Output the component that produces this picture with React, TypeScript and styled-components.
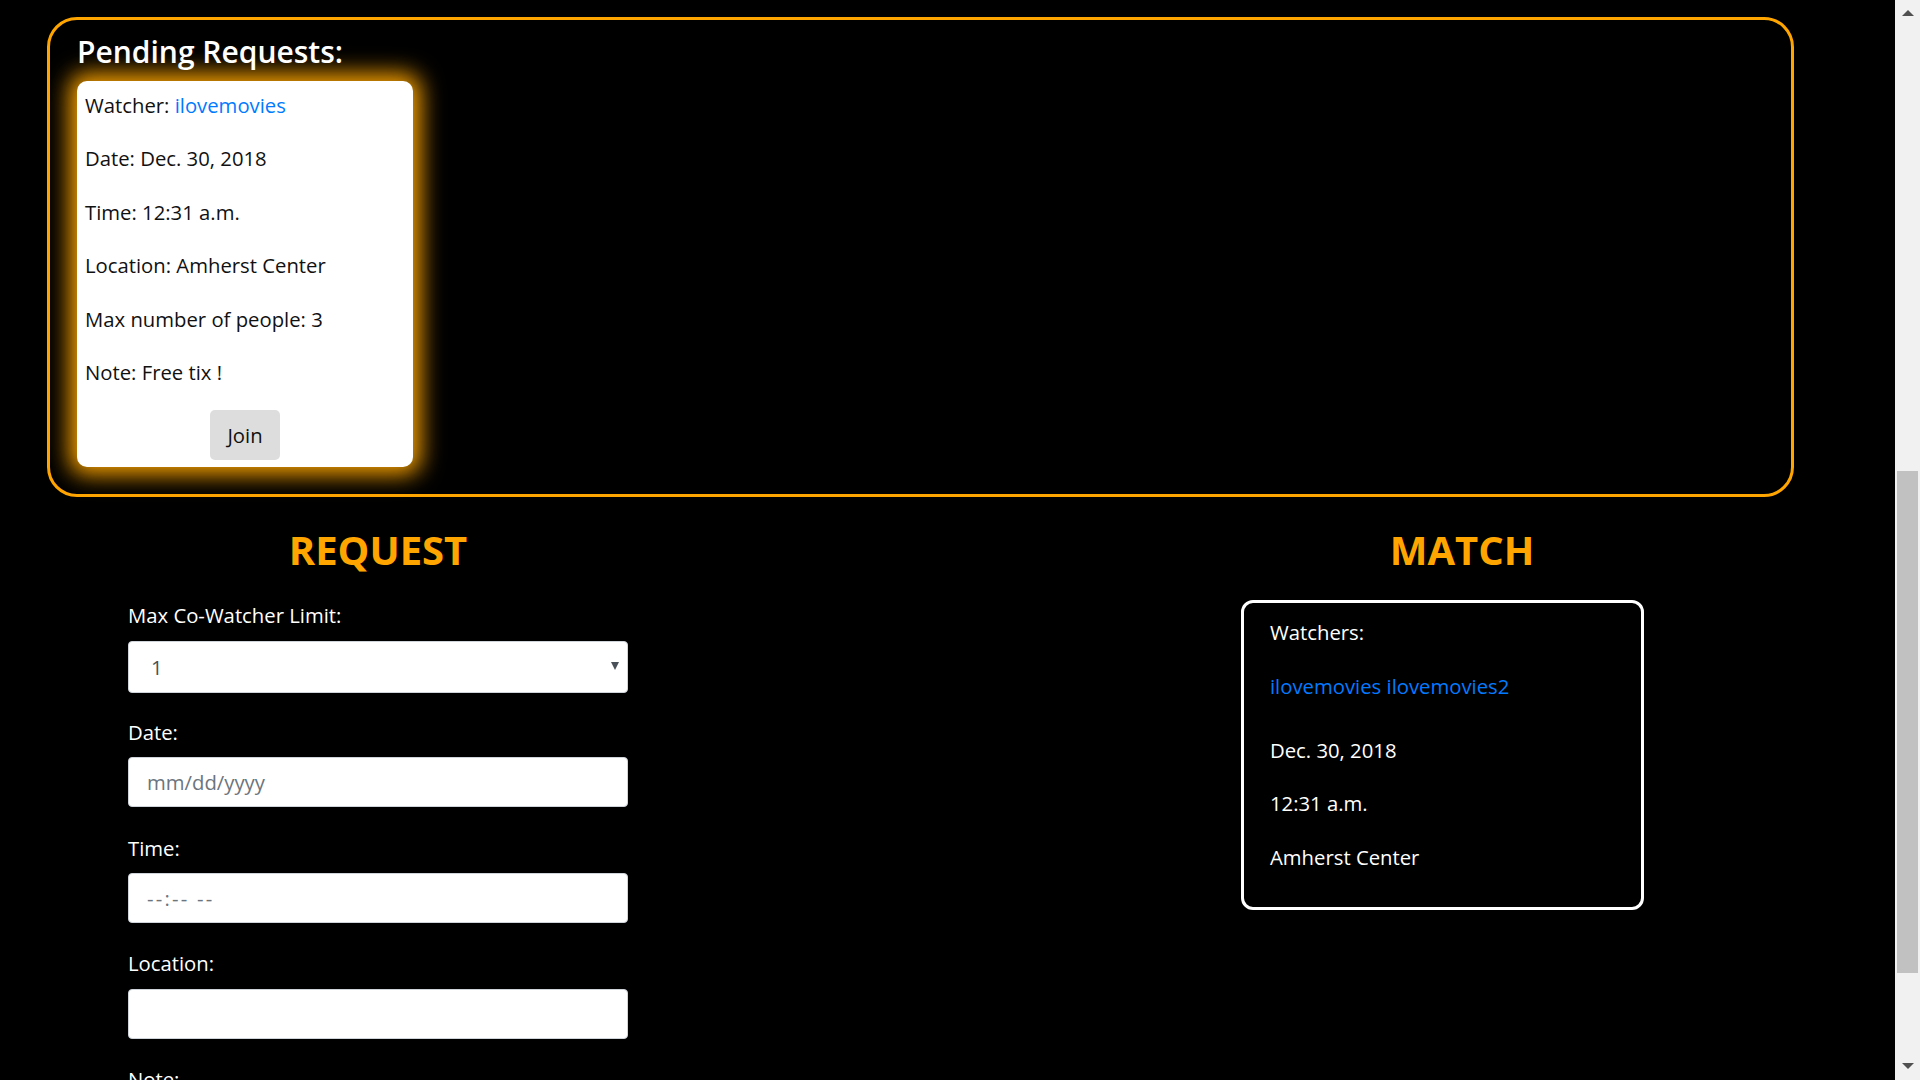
import React from "react";
import styled, { createGlobalStyle } from "styled-components";

const Global = createGlobalStyle`
  html, body {
    margin: 0;
    padding: 0;
    background: #000;
    overflow: hidden;
  }
  body {
    font-family: "Open Sans", "Noto Sans", sans-serif;
  }
  * { box-sizing: border-box; }
`;

const TEXT = "20.3px";

const Screen = styled.div`
  display: flex;
  width: 1920px;
  height: 1080px;
  overflow: hidden;
  background: #000;
`;

const Page = styled.main`
  flex: 0 0 1895px;
  height: 1080px;
  overflow: hidden;
  padding-top: 17px;
  color: #fff;
`;

const ScrollTrack = styled.div`
  flex: 0 0 25px;
  height: 1080px;
  background: #f1f1f1;
  display: flex;
  flex-direction: column;
  align-items: center;
  padding: 10px 0 11px;
`;

const Arrow = styled.div<{ $down?: boolean }>`
  width: 0;
  height: 0;
  border-left: 6px solid transparent;
  border-right: 6px solid transparent;
  ${(p) => (p.$down ? "border-top: 6px solid #505050;" : "border-bottom: 6px solid #505050;")}
`;

const Thumb = styled.div`
  width: 21px;
  height: 502px;
  margin-top: 455px;
  background: #c1c1c1;
  margin-bottom: auto;
`;

const PendingBox = styled.section`
  margin-left: 47px;
  width: 1747px;
  border: 3px solid #ffa500;
  border-radius: 30px;
  padding: 14px 27px 27px;
`;

const PendingTitle = styled.h3`
  margin: 0 0 13px;
  font-size: 30px;
  line-height: 34px;
  font-weight: 600;
  color: #fff;
  position: relative;
  top: 1px;
`;

const RequestCard = styled.div`
  width: 336px;
  background: #fff;
  border-radius: 10px;
  padding: 9px 8px 7px;
  box-shadow: 0 0 22px 8px rgba(255, 165, 0, 0.95);
  display: flex;
  flex-direction: column;
  color: #111;
`;

const CardLine = styled.p`
  margin: 0 0 23.4px;
  font-size: ${TEXT};
  line-height: 30px;
`;

const UserLink = styled.a`
  color: #007bff;
  text-decoration: none;
`;

const JoinButton = styled.button`
  align-self: center;
  height: 50px;
  padding: 0 17px;
  font-family: inherit;
  font-size: ${TEXT};
  color: #111;
  background: #dddddd;
  border: none;
  border-radius: 5px;
`;

const Lower = styled.section`
  display: grid;
  grid-template-columns: 756px 273px 1fr;
  margin-top: 28px;
`;

const Column = styled.div<{ $col: number }>`
  grid-column: ${(p) => p.$col};
  display: flex;
  flex-direction: column;
  align-items: center;
`;

const SectionTitle = styled.h1`
  margin: 0;
  font-size: 40px;
  line-height: 50px;
  font-weight: 700;
  color: #ffa500;
`;

const Form = styled.form`
  width: 500px;
  margin-top: 25px;
  display: flex;
  flex-direction: column;
`;

const Field = styled.div<{ $tight?: boolean }>`
  display: flex;
  flex-direction: column;
  margin-bottom: ${(p) => (p.$tight ? 24 : 25.2)}px;
`;

const Label = styled.label`
  font-size: ${TEXT};
  line-height: 30px;
  color: #fff;
  margin-bottom: 10.5px;
`;

const SelectWrap = styled.div`
  position: relative;
`;

const Select = styled.select`
  appearance: none;
  -webkit-appearance: none;
  width: 100%;
  height: 52px;
  padding: 0 22px;
  font-family: inherit;
  font-size: ${TEXT};
  color: #495057;
  background: #fff;
  border: 1px solid #ced4da;
  border-radius: 4px;
`;

const SelectArrow = styled.span`
  position: absolute;
  right: 9px;
  top: 21px;
  width: 0;
  height: 0;
  border-left: 4px solid transparent;
  border-right: 4px solid transparent;
  border-top: 8px solid #495057;
  pointer-events: none;
`;

const Input = styled.input<{ $spaced?: boolean }>`
  width: 100%;
  height: 50px;
  padding: 0 18px;
  font-family: inherit;
  font-size: ${TEXT};
  color: #495057;
  background: #fff;
  border: 1px solid #ced4da;
  border-radius: 4px;
  &::placeholder {
    color: #6c757d;
    opacity: 1;
    letter-spacing: ${(p) => (p.$spaced ? "2.2px" : "normal")};
  }
`;

const MatchCard = styled.div`
  align-self: flex-start;
  margin-left: 212px;
  margin-top: 25px;
  width: 403px;
  border: 3px solid #fff;
  border-radius: 12px;
  padding: 14px 24px 35px 26px;
  display: flex;
  flex-direction: column;
`;

const MatchLine = styled.p<{ $extra?: boolean }>`
  margin: 0 0 ${(p) => (p.$extra ? 34 : 23.5)}px;
  font-size: ${TEXT};
  line-height: 30px;
  color: #fff;
  &:last-child {
    margin-bottom: 0;
  }
`;

export default function App() {
  return (
    <Screen>
      <Global />
      <Page>
        <PendingBox>
          <PendingTitle>Pending Requests:</PendingTitle>
          <RequestCard>
            <CardLine>
              Watcher: <UserLink href="#">ilovemovies</UserLink>
            </CardLine>
            <CardLine>Date: Dec. 30, 2018</CardLine>
            <CardLine>Time: 12:31 a.m.</CardLine>
            <CardLine>Location: Amherst Center</CardLine>
            <CardLine>Max number of people: 3</CardLine>
            <CardLine>Note: Free tix !</CardLine>
            <JoinButton type="button">Join</JoinButton>
          </RequestCard>
        </PendingBox>
        <Lower>
          <Column $col={1}>
            <SectionTitle>REQUEST</SectionTitle>
            <Form onSubmit={(e) => e.preventDefault()}>
              <Field $tight>
                <Label>Max Co-Watcher Limit:</Label>
                <SelectWrap>
                  <Select defaultValue="1">
                    <option value="1">1</option>
                    <option value="2">2</option>
                    <option value="3">3</option>
                  </Select>
                  <SelectArrow />
                </SelectWrap>
              </Field>
              <Field>
                <Label>Date:</Label>
                <Input type="text" placeholder="mm/dd/yyyy" />
              </Field>
              <Field>
                <Label>Time:</Label>
                <Input type="text" placeholder="--:-- --" $spaced />
              </Field>
              <Field>
                <Label>Location:</Label>
                <Input type="text" />
              </Field>
              <Field>
                <Label>Note:</Label>
                <Input type="text" />
              </Field>
            </Form>
          </Column>
          <Column $col={3}>
            <SectionTitle>MATCH</SectionTitle>
            <MatchCard>
              <MatchLine>Watchers:</MatchLine>
              <MatchLine $extra>
                <UserLink href="#">ilovemovies</UserLink>{" "}
                <UserLink href="#">ilovemovies2</UserLink>
              </MatchLine>
              <MatchLine>Dec. 30, 2018</MatchLine>
              <MatchLine>12:31 a.m.</MatchLine>
              <MatchLine>Amherst Center</MatchLine>
            </MatchCard>
          </Column>
        </Lower>
      </Page>
      <ScrollTrack>
        <Arrow />
        <Thumb />
        <Arrow $down />
      </ScrollTrack>
    </Screen>
  );
}
